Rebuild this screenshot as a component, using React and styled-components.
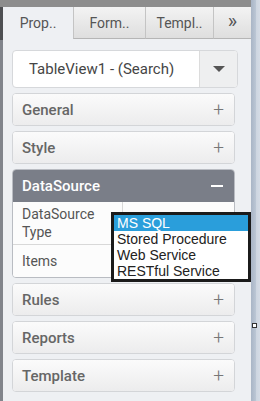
import React from "react";
import styled, { createGlobalStyle } from "styled-components";

const Global = createGlobalStyle`
  html, body { margin: 0; padding: 0; background: #eef0f3; }
  body { font-family: Roboto, "Liberation Sans", sans-serif; }
`;

const sections = ["General", "Style"];
const lowerSections = ["Rules", "Reports", "Template"];
const sourceTypes = ["MS SQL", "Stored Procedure", "Web Service", "RESTful Service"];

export default function App() {
  return (
    <Frame>
      <Global />
      <LeftRail>
        <div className="cap" />
        <div className="dark" />
      </LeftRail>
      <Panel>
        <TopStrip />
        <Tabs>
          <Tab $active $w={70}>Prop..</Tab>
          <Tab $w={72}>Form..</Tab>
          <Tab $w={68}>Templ..</Tab>
          <Tab $w={38} $more>&raquo;</Tab>
        </Tabs>
        <Body>
          <Select>
            <span className="value">TableView1 - (Search)</span>
            <span className="btn">
              <svg width="12" height="6" viewBox="0 0 12 6">
                <path d="M0 0h12L6 6z" fill="#555" />
              </svg>
            </span>
          </Select>
          {sections.map((s) => (
            <Card key={s}>
              <Header>
                {s}
                <Sign>+</Sign>
              </Header>
            </Card>
          ))}
          <Card $open>
            <Header $open>
              DataSource
              <Minus />
            </Header>
            <Row $h={42}>
              <Label>DataSource<br />Type</Label>
              <Cell />
            </Row>
            <Row $h={32} $last>
              <Label>Items</Label>
              <Cell />
            </Row>
            <DropList>
              {sourceTypes.map((t, i) => (
                <Option key={t} $selected={i === 0}>{t}</Option>
              ))}
            </DropList>
          </Card>
          {lowerSections.map((s) => (
            <Card key={s}>
              <Header>
                {s}
                <Sign>+</Sign>
              </Header>
            </Card>
          ))}
        </Body>
      </Panel>
      <RightRail>
        <Handle />
      </RightRail>
    </Frame>
  );
}

const Frame = styled.div`
  display: flex;
  width: 260px;
  height: 401px;
  overflow: hidden;
  position: relative;
`;

const LeftRail = styled.div`
  width: 3px;
  flex: none;
  background: #81848b;
  display: flex;
  flex-direction: column;
  .cap { height: 7px; background: #8d8d8d; }
  .dark { height: 33px; background: #4e4f52; }
`;

const RightRail = styled.div`
  width: 9px;
  flex: none;
  position: relative;
  background: linear-gradient(to right, #a9b5c6 0, #bcc7d5 5px, #cdd5e0 5px, #d4dbe5 9px);
`;

const Handle = styled.div`
  position: absolute;
  left: 1px;
  top: 323px;
  width: 3px;
  height: 3px;
  border: 1px solid #333;
  background: #fff;
`;

const Panel = styled.div`
  flex: 1;
  display: flex;
  flex-direction: column;
  background: #eef0f3;
`;

const TopStrip = styled.div`
  height: 7px;
  background: #8d8d8d;
`;

const Tabs = styled.div`
  display: flex;
  height: 32px;
`;

const Tab = styled.div`
  width: ${(p) => p.$w}px;
  flex: none;
  box-sizing: border-box;
  display: flex;
  align-items: center;
  justify-content: center;
  font-size: ${(p) => (p.$more ? "20px" : "14px")};
  color: #555;
  padding-bottom: ${(p) => (p.$more ? "3px" : "0")};
  background: ${(p) =>
    p.$active ? "#eef0f3" : "linear-gradient(#f3f3f3, #dedede)"};
  border-left: ${(p) => (p.$active ? "none" : "1px solid #c4c4c4")};
  border-bottom: ${(p) => (p.$active ? "none" : "1px solid #b5b5b5")};
`;

const Body = styled.div`
  padding: 11px 13px 0 9px;
  display: flex;
  flex-direction: column;
  gap: 5px;
`;

const Select = styled.div`
  height: 38px;
  box-sizing: border-box;
  display: flex;
  border: 1px solid #d6d8db;
  border-radius: 4px;
  background: #fff;
  overflow: hidden;
  .value {
    flex: 1;
    display: flex;
    align-items: center;
    padding-left: 16px;
    font-size: 15px;
    color: #454545;
  }
  .btn {
    width: 37px;
    display: flex;
    align-items: center;
    justify-content: center;
    background: #eeeff0;
    border-left: 1px solid #dcdcdc;
  }
`;

const Card = styled.div`
  position: relative;
  margin-right: 3px;
  border: 1px solid ${(p) => (p.$open ? "#b9bcc2" : "#d3d5d8")};
  border-radius: 4px;
  background: #fff;
`;

const Header = styled.div`
  height: ${(p) => (p.$open ? "32px" : "31px")};
  display: flex;
  align-items: center;
  justify-content: space-between;
  padding: 0 10px 0 9px;
  font-size: 15px;
  font-weight: 500;
  border-radius: 3px 3px ${(p) => (p.$open ? "0 0" : "3px 3px")};
  color: ${(p) => (p.$open ? "#fff" : "#666")};
  background: ${(p) =>
    p.$open ? "#7a7e88" : "linear-gradient(#fbfbfb, #ececed)"};
`;

const Sign = styled.span`
  font-size: 19px;
  font-weight: 300;
  color: #777;
`;

const Minus = styled.span`
  width: 12px;
  height: 2px;
  margin-right: 1px;
  background: #fff;
`;

const Row = styled.div`
  display: flex;
  height: ${(p) => p.$h}px;
  border-bottom: ${(p) => (p.$last ? "none" : "1px solid #d8d8d8")};
  background: #fcfcfc;
  border-radius: 0 0 ${(p) => (p.$last ? "3px 3px" : "0 0")};
`;

const Label = styled.div`
  width: 110px;
  box-sizing: border-box;
  padding-left: 9px;
  display: flex;
  align-items: center;
  font-size: 14px;
  line-height: 18px;
  color: #555;
  border-right: 1px solid #d8d8d8;
`;

const Cell = styled.div`
  flex: 1;
`;

const DropList = styled.div`
  position: absolute;
  left: 98px;
  top: 42px;
  width: 140px;
  box-sizing: border-box;
  border: 3px solid #1b1b1b;
  background: #fff;
  z-index: 2;
`;

const Option = styled.div`
  height: 16px;
  line-height: 16px;
  padding-left: 3px;
  font-family: "Liberation Sans", Arial, sans-serif;
  font-size: 14px;
  color: ${(p) => (p.$selected ? "#fff" : "#222")};
  background: ${(p) => (p.$selected ? "#2a9edb" : "transparent")};
`;
